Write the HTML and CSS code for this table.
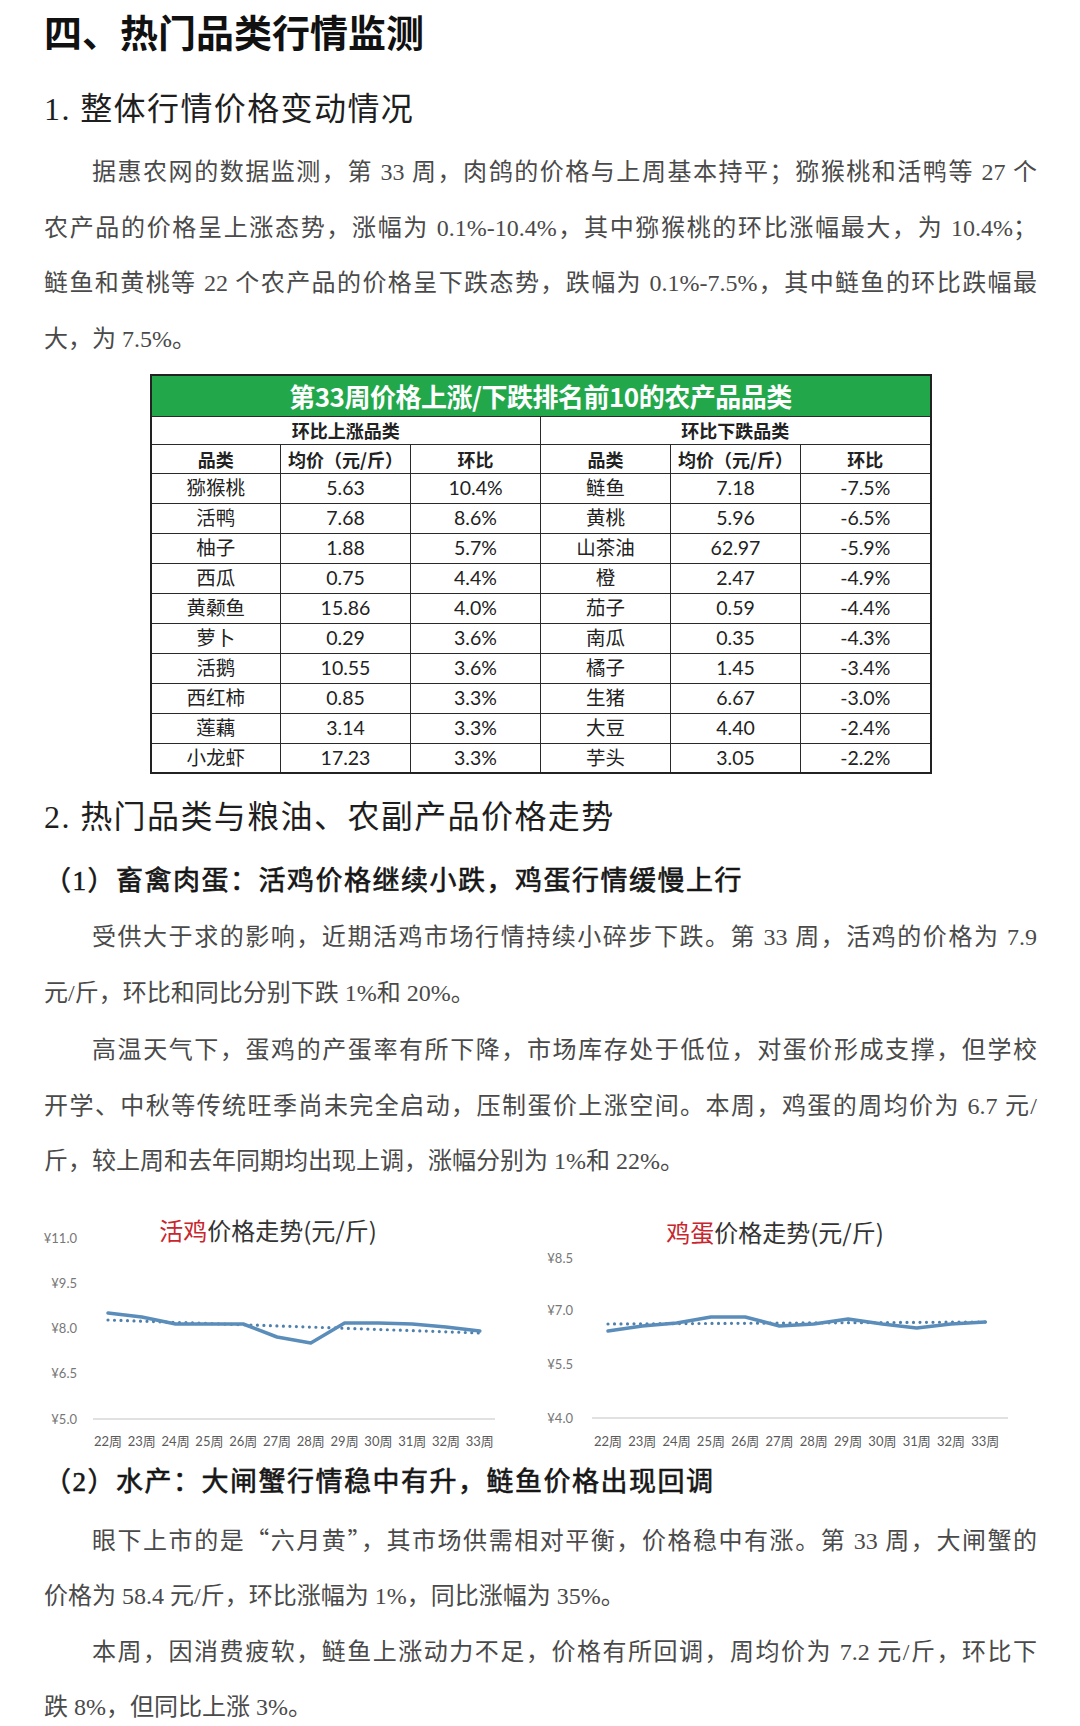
FILE: index.html
```html
<!DOCTYPE html>
<html lang="zh-CN">
<head>
<meta charset="utf-8">
<title>热门品类行情监测</title>
<link rel="stylesheet" href="styles.css">
</head>
<body>
<main class="page">
  <h1 class="title">四、热门品类行情监测</h1>
  <h2 class="sec">1. 整体行情价格变动情况</h2>
  <p class="para p1">
    <span class="ln first">据惠农网的数据监测，第 33 周，肉鸽的价格与上周基本持平；猕猴桃和活鸭等 27 个</span>
    <span class="ln">农产品的价格呈上涨态势，涨幅为 0.1%-10.4%，其中猕猴桃的环比涨幅最大，为 10.4%；</span>
    <span class="ln">鲢鱼和黄桃等 22 个农产品的价格呈下跌态势，跌幅为 0.1%-7.5%，其中鲢鱼的环比跌幅最</span>
    <span class="last">大，为 7.5%。</span>
  </p>

  <table class="rank">
    <colgroup><col><col><col><col><col><col></colgroup>
    <thead>
      <tr class="cap"><th colspan="6">第33周价格上涨/下跌排名前10的农产品品类</th></tr>
      <tr class="grp"><th colspan="3">环比上涨品类</th><th colspan="3">环比下跌品类</th></tr>
      <tr class="hd"><th>品类</th><th>均价（元/斤）</th><th>环比</th><th>品类</th><th>均价（元/斤）</th><th>环比</th></tr>
    </thead>
    <tbody>
      <tr><td>猕猴桃</td><td>5.63</td><td>10.4%</td><td>鲢鱼</td><td>7.18</td><td>-7.5%</td></tr>
      <tr><td>活鸭</td><td>7.68</td><td>8.6%</td><td>黄桃</td><td>5.96</td><td>-6.5%</td></tr>
      <tr><td>柚子</td><td>1.88</td><td>5.7%</td><td>山茶油</td><td>62.97</td><td>-5.9%</td></tr>
      <tr><td>西瓜</td><td>0.75</td><td>4.4%</td><td>橙</td><td>2.47</td><td>-4.9%</td></tr>
      <tr><td>黄颡鱼</td><td>15.86</td><td>4.0%</td><td>茄子</td><td>0.59</td><td>-4.4%</td></tr>
      <tr><td>萝卜</td><td>0.29</td><td>3.6%</td><td>南瓜</td><td>0.35</td><td>-4.3%</td></tr>
      <tr><td>活鹅</td><td>10.55</td><td>3.6%</td><td>橘子</td><td>1.45</td><td>-3.4%</td></tr>
      <tr><td>西红柿</td><td>0.85</td><td>3.3%</td><td>生猪</td><td>6.67</td><td>-3.0%</td></tr>
      <tr><td>莲藕</td><td>3.14</td><td>3.3%</td><td>大豆</td><td>4.40</td><td>-2.4%</td></tr>
      <tr><td>小龙虾</td><td>17.23</td><td>3.3%</td><td>芋头</td><td>3.05</td><td>-2.2%</td></tr>
    </tbody>
  </table>

  <h2 class="sec sec2">2. 热门品类与粮油、农副产品价格走势</h2>
  <h3 class="sub">（1）畜禽肉蛋：活鸡价格继续小跌，鸡蛋行情缓慢上行</h3>
  <p class="para p2">
    <span class="ln first">受供大于求的影响，近期活鸡市场行情持续小碎步下跌。第 33 周，活鸡的价格为 7.9</span>
    <span class="last">元/斤，环比和同比分别下跌 1%和 20%。</span>
  </p>
  <p class="para p3">
    <span class="ln first">高温天气下，蛋鸡的产蛋率有所下降，市场库存处于低位，对蛋价形成支撑，但学校</span>
    <span class="ln">开学、中秋等传统旺季尚未完全启动，压制蛋价上涨空间。本周，鸡蛋的周均价为 6.7 元/</span>
    <span class="last">斤，较上周和去年同期均出现上调，涨幅分别为 1%和 22%。</span>
  </p>

  <div class="charts">
    <svg class="chart" width="480" height="270" viewBox="0 0 480 270">
      <text class="ctitle" x="238" y="39" text-anchor="middle" dominant-baseline="central"><tspan class="hl">活鸡</tspan>价格走势(元/斤)</text>
      <g class="ylab" text-anchor="end">
        <text x="47" y="48" dominant-baseline="central">¥11.0</text>
        <text x="47" y="93" dominant-baseline="central">¥9.5</text>
        <text x="47" y="138" dominant-baseline="central">¥8.0</text>
        <text x="47" y="183" dominant-baseline="central">¥6.5</text>
        <text x="47" y="229" dominant-baseline="central">¥5.0</text>
      </g>
      <line class="axis" x1="63" y1="229" x2="465" y2="229"/>
      <g class="xlab" text-anchor="middle">
        <text x="78" y="251" dominant-baseline="central">22周</text>
        <text x="111.8" y="251" dominant-baseline="central">23周</text>
        <text x="145.6" y="251" dominant-baseline="central">24周</text>
        <text x="179.4" y="251" dominant-baseline="central">25周</text>
        <text x="213.2" y="251" dominant-baseline="central">26周</text>
        <text x="247" y="251" dominant-baseline="central">27周</text>
        <text x="280.8" y="251" dominant-baseline="central">28周</text>
        <text x="314.6" y="251" dominant-baseline="central">29周</text>
        <text x="348.4" y="251" dominant-baseline="central">30周</text>
        <text x="382.2" y="251" dominant-baseline="central">31周</text>
        <text x="416" y="251" dominant-baseline="central">32周</text>
        <text x="449.8" y="251" dominant-baseline="central">33周</text>
      </g>
      <line class="trend" x1="78" y1="130" x2="450" y2="143"/>
      <polyline class="series" points="78,123 111.8,127 145.6,134 179.4,134 213.2,134 247,147 280.8,153 314.6,133 348.4,133 382.2,134 416,137 449.8,141"/>
    </svg>

    <svg class="chart" width="480" height="270" viewBox="0 0 480 270">
      <text class="ctitle" x="245" y="41" text-anchor="middle" dominant-baseline="central"><tspan class="hl">鸡蛋</tspan>价格走势(元/斤)</text>
      <g class="ylab" text-anchor="end">
        <text x="43" y="68" dominant-baseline="central">¥8.5</text>
        <text x="43" y="120" dominant-baseline="central">¥7.0</text>
        <text x="43" y="174" dominant-baseline="central">¥5.5</text>
        <text x="43" y="228" dominant-baseline="central">¥4.0</text>
      </g>
      <line class="axis" x1="62" y1="228" x2="478" y2="228"/>
      <g class="xlab" text-anchor="middle">
        <text x="78" y="251" dominant-baseline="central">22周</text>
        <text x="112.3" y="251" dominant-baseline="central">23周</text>
        <text x="146.6" y="251" dominant-baseline="central">24周</text>
        <text x="180.9" y="251" dominant-baseline="central">25周</text>
        <text x="215.2" y="251" dominant-baseline="central">26周</text>
        <text x="249.5" y="251" dominant-baseline="central">27周</text>
        <text x="283.8" y="251" dominant-baseline="central">28周</text>
        <text x="318.1" y="251" dominant-baseline="central">29周</text>
        <text x="352.4" y="251" dominant-baseline="central">30周</text>
        <text x="386.7" y="251" dominant-baseline="central">31周</text>
        <text x="421" y="251" dominant-baseline="central">32周</text>
        <text x="455.3" y="251" dominant-baseline="central">33周</text>
      </g>
      <line class="trend" x1="78" y1="134" x2="455" y2="132"/>
      <polyline class="series" points="78,141 112.3,136 146.6,133 180.9,127 215.2,127 249.5,136 283.8,134 318.1,129 352.4,134 386.7,138 421,134 455.3,132"/>
    </svg>
  </div>

  <h3 class="sub sub2">（2）水产：大闸蟹行情稳中有升，鲢鱼价格出现回调</h3>
  <p class="para p4">
    <span class="ln first">眼下上市的是<span class="cjk">“</span>六月黄<span class="cjk">”</span>，其市场供需相对平衡，价格稳中有涨。第 33 周，大闸蟹的</span>
    <span class="last">价格为 58.4 元/斤，环比涨幅为 1%，同比涨幅为 35%。</span>
  </p>
  <p class="para p5">
    <span class="ln first">本周，因消费疲软，鲢鱼上涨动力不足，价格有所回调，周均价为 7.2 元/斤，环比下</span>
    <span class="last">跌 8%，但同比上涨 3%。</span>
  </p>
</main>
</body>
</html>
```

FILE: styles.css
```css
* {
  box-sizing: border-box;
}

html,
body {
  margin: 0;
  padding: 0;
  background: #ffffff;
}

body {
  width: 1080px;
  font-family: "Liberation Serif", "Noto Sans CJK SC", serif;
  color: #333;
}

.page {
  padding: 6px 43px 0 44px;
}

.title {
  margin: 0;
  font-family: "Noto Sans CJK SC", sans-serif;
  font-weight: 700;
  font-size: 38px;
  line-height: 50px;
  color: #111;
}

.sec {
  margin: 28px 0 0;
  font-family: "Liberation Serif", "Noto Sans CJK SC", serif;
  font-weight: 400;
  font-size: 32px;
  line-height: 50px;
  letter-spacing: 1.4px;
  color: #1e1e1e;
}

.sec2 {
  margin-top: 18px;
}

.sub {
  margin: 17px 0 0;
  font-family: "Liberation Serif", "Noto Sans CJK SC", serif;
  font-weight: 400;
  font-size: 27px;
  line-height: 44px;
  letter-spacing: 1.5px;
  color: #161616;
  -webkit-text-stroke: 0.6px #161616;
}

.sub2 {
  margin-top: 0;
}

.para {
  margin: 0;
  font-size: 24px;
  line-height: 55.5px;
  color: #4a4a4a;
}

.para .ln {
  display: block;
  text-align: justify;
  text-align-last: justify;
}

.para .first {
  text-indent: 48px;
}

.para .last {
  display: block;
  text-align: left;
}

.cjk {
  font-family: "Noto Sans CJK SC", sans-serif;
}

.p1 {
  margin-top: 11px;
}

.p2 {
  margin-top: 7px;
}

.p3 {
  margin-top: 2px;
}

.p4 {
  margin-top: 7px;
}

.p5 {
  margin-top: 0;
}

/* ranking table */
.rank {
  margin: 7px auto 0;
  width: 782px;
  table-layout: fixed;
  border-collapse: collapse;
  border: 2px solid #222;
  font-family: Lato, "Noto Sans CJK SC", sans-serif;
  color: #222;
}

.rank th,
.rank td {
  padding: 0;
  border: 1.5px solid #2a2a2a;
  text-align: center;
  vertical-align: middle;
  line-height: 1;
}

.rank .cap th {
  height: 41px;
  background: #22a84b;
  color: #ffffff;
  font-family: "Noto Sans CJK SC", sans-serif;
  font-weight: 700;
  font-size: 26px;
  letter-spacing: -0.5px;
}

.rank .grp th {
  height: 28px;
  font-family: "Noto Sans CJK SC", sans-serif;
  font-weight: 700;
  font-size: 18px;
}

.rank .hd th {
  height: 29px;
  font-family: "Noto Sans CJK SC", sans-serif;
  font-weight: 700;
  font-size: 18px;
}

.rank td {
  height: 30px;
  font-size: 19.5px;
  font-weight: 400;
}

/* charts */
.charts {
  display: flex;
  gap: 20px;
  margin-left: -14px;
  height: 270px;
}

.chart {
  display: block;
  width: 480px;
  height: 270px;
}

.ctitle {
  font-family: "Noto Sans CJK SC", sans-serif;
  font-size: 24px;
  fill: #333;
}

.ctitle .hl {
  fill: #c8262e;
}

.ylab text {
  font-family: Lato, "Noto Sans CJK SC", sans-serif;
  font-size: 13px;
  fill: #777;
}

.xlab text {
  font-family: Lato, "Noto Sans CJK SC", sans-serif;
  font-size: 13px;
  fill: #5a5a5a;
}

.axis {
  stroke: #c4c4c4;
  stroke-width: 1.2;
}

.series {
  fill: none;
  stroke: #5b8dba;
  stroke-width: 3.5;
  stroke-linejoin: round;
  stroke-linecap: round;
}

.trend {
  fill: none;
  stroke: #4f80ab;
  stroke-width: 3.2;
  stroke-linecap: round;
  stroke-dasharray: 0 6.5;
}
```
